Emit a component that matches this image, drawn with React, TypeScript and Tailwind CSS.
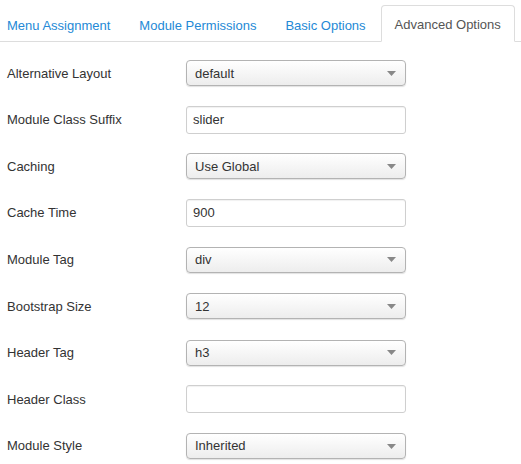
import React from "react";

type Row = { label: string; type: "select" | "input"; value: string };

const rows: Row[] = [
  { label: "Alternative Layout", type: "select", value: "default" },
  { label: "Module Class Suffix", type: "input", value: "slider" },
  { label: "Caching", type: "select", value: "Use Global" },
  { label: "Cache Time", type: "input", value: "900" },
  { label: "Module Tag", type: "select", value: "div" },
  { label: "Bootstrap Size", type: "select", value: "12" },
  { label: "Header Tag", type: "select", value: "h3" },
  { label: "Header Class", type: "input", value: "" },
  { label: "Module Style", type: "select", value: "Inherited" },
];

function Select({ value }: { value: string }) {
  return (
    <div className="flex h-[26px] w-[220px] items-center justify-between rounded-[4px] border border-[#b3b3b3] bg-gradient-to-b from-white to-[#ededed] pl-[8px] pr-[9px] shadow-[0_1px_1px_rgba(0,0,0,0.12)]">
      <span className="text-[13px] text-[#333]">{value}</span>
      <svg width="9" height="5" viewBox="0 0 9 5">
        <path d="M0 0 L9 0 L4.5 5 Z" fill="#888" />
      </svg>
    </div>
  );
}

function Input({ value }: { value: string }) {
  return (
    <div className="flex h-[28px] w-[220px] items-center rounded-[3px] border border-[#cfcfcf] bg-white px-[6px] shadow-[inset_0_1px_1px_rgba(0,0,0,0.06)]">
      <span className="text-[13px] text-[#333]">{value}</span>
    </div>
  );
}

export default function App() {
  const tabs = ["Menu Assignment", "Module Permissions", "Basic Options"];
  return (
    <div
      className="h-[464px] w-[521px] overflow-hidden bg-white text-[13px] text-[#333]"
      style={{ fontFamily: '"Liberation Sans", Arial, sans-serif' }}
    >
      <div className="flex h-[42px] items-end border-b border-[#ddd]">
        {tabs.map((t, i) => (
          <div
            key={t}
            className={
              "mb-[-1px] flex h-[36px] items-center pt-[3px] text-[#2489d6] " +
              (i === 0 ? "pl-[7px] pr-[14px]" : "px-[14px]") +
              " mr-[1px]"
            }
          >
            {t}
          </div>
        ))}
        <div className="mb-[-1px] flex h-[37px] items-center rounded-t-[4px] border border-b-transparent border-[#ddd] bg-white px-[13px] pt-[3px] text-[#555]">
          Advanced Options
        </div>
      </div>
      <div className="pt-[8px]">
        {rows.map((r) => (
          <div key={r.label} className="flex h-[46.6px] items-center">
            <div className="w-[186px] pl-[7px] text-[#333]">{r.label}</div>
            {r.type === "select" ? <Select value={r.value} /> : <Input value={r.value} />}
          </div>
        ))}
      </div>
    </div>
  );
}
